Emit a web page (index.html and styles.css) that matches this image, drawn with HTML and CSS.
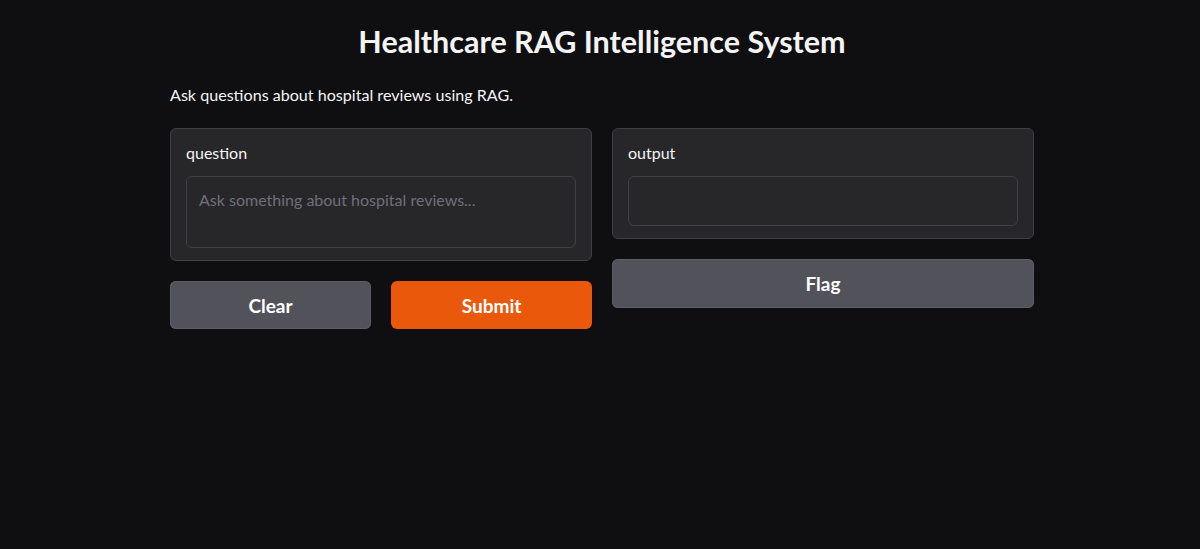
FILE: index.html
```html
<!DOCTYPE html>
<html lang="en">
<head>
<meta charset="utf-8">
<title>Healthcare RAG Intelligence System</title>
<link rel="stylesheet" href="styles.css">
</head>
<body>
<main class="app">
  <h1 class="title">Healthcare RAG Intelligence System</h1>
  <p class="desc">Ask questions about hospital reviews using RAG.</p>
  <div class="row">
    <div class="col">
      <div class="block">
        <label class="label" for="q">question</label>
        <textarea id="q" class="input input-q" placeholder="Ask something about hospital reviews..."></textarea>
      </div>
      <div class="btn-row">
        <button class="btn btn-secondary">Clear</button>
        <button class="btn btn-primary">Submit</button>
      </div>
    </div>
    <div class="col">
      <div class="block">
        <span class="label">output</span>
        <div class="input input-out"></div>
      </div>
      <button class="btn btn-secondary btn-flag">Flag</button>
    </div>
  </div>
</main>
</body>
</html>
```

FILE: styles.css
```css
html, body {
  margin: 0;
  padding: 0;
  background: #0f0f11;
  color: #f4f4f5;
  font-family: "Lato", "Open Sans", sans-serif;
}

.app {
  width: 864px;
  margin: 0 auto;
  padding: 0 0 0 4px;
}

.title {
  margin: 0;
  padding-top: 24px;
  height: 35px;
  line-height: 35px;
  text-align: center;
  font-size: 30.5px;
  font-weight: 700;
}

.desc {
  margin: 0;
  padding-top: 25px;
  height: 22px;
  line-height: 22px;
  font-size: 16.1px;
}

.row {
  display: flex;
  gap: 20px;
  margin-top: 22px;
}

.col {
  flex: 1;
  display: flex;
  flex-direction: column;
  gap: 20px;
  min-width: 0;
}

.block {
  background: #27272a;
  border: 1px solid #3f3f46;
  border-radius: 6px;
  padding: 13px 15px 12px;
  display: flex;
  flex-direction: column;
}

.label {
  display: block;
  height: 22px;
  line-height: 22px;
  font-size: 16px;
  margin-bottom: 12px;
  color: #f4f4f5;
}

.input {
  box-sizing: border-box;
  width: 100%;
  background: #27272a;
  border: 1px solid #404047;
  border-radius: 6px;
  font-family: inherit;
  font-size: 16px;
  line-height: 22px;
  color: #f4f4f5;
  padding: 12px 12px;
  margin: 0;
  outline: none;
  resize: none;
}

.input-q {
  height: 72px;
  display: block;
}

.input-q::placeholder {
  color: #6f6f78;
}

.input-out {
  height: 50px;
}

.btn-row {
  display: flex;
  gap: 20px;
}

.btn {
  flex: 1;
  height: 48px;
  border: none;
  border-radius: 6px;
  font-family: inherit;
  font-size: 19px;
  font-weight: 700;
  color: #ffffff;
  cursor: pointer;
}

.btn-flag {
  flex: none;
  width: 100%;
  height: 49px;
}

.btn-secondary {
  background: #52525b;
  box-shadow: inset 0 0 0 1px #5c5c65;
}

.btn-primary {
  background: #ea580c;
}
```
